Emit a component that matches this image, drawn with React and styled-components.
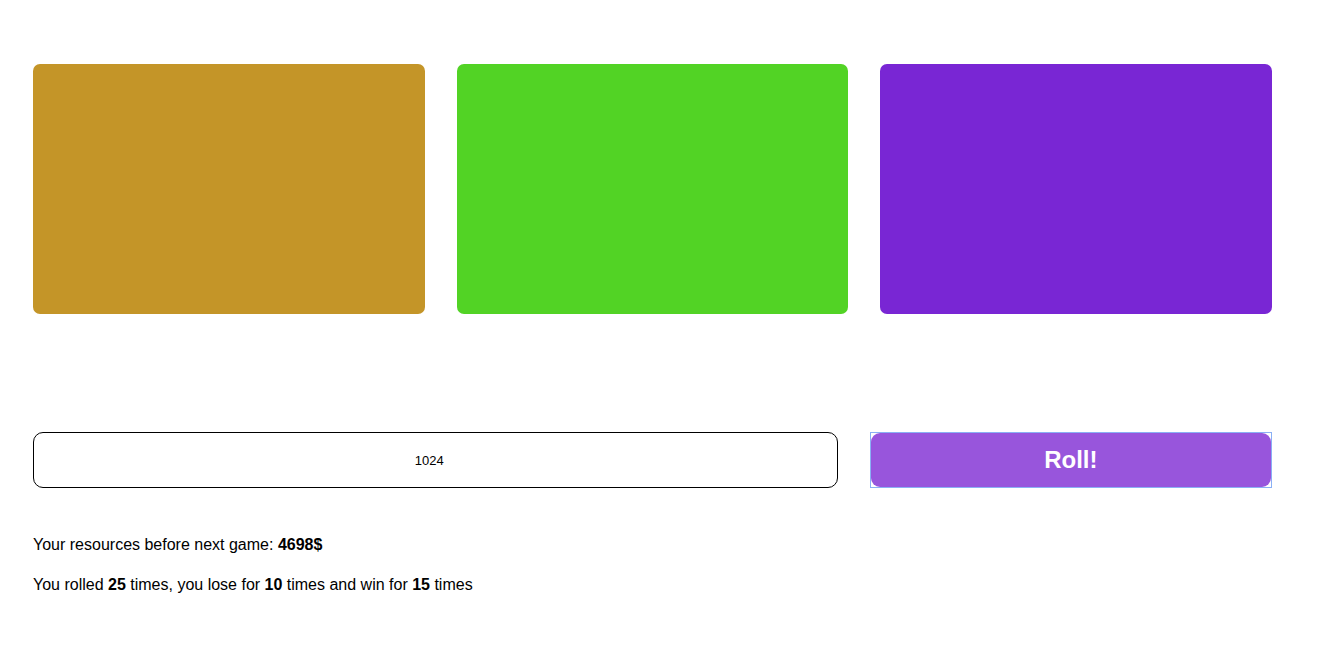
import React from "react";
import styled, { createGlobalStyle } from "styled-components";

const Global = createGlobalStyle`
  html, body { margin: 0; padding: 0; background: #fff; }
  body { font-family: "Liberation Sans", Arial, sans-serif; color: #000; }
`;

const Page = styled.div`
  width: 1239px;
  padding: 64px 0 0 33px;
`;

const Cards = styled.div`
  display: grid;
  grid-template-columns: repeat(3, 1fr);
  gap: 32px;
`;

const Card = styled.div`
  height: 250px;
  border-radius: 7px;
  background: ${(p) => p.$color};
`;

const Controls = styled.div`
  display: grid;
  grid-template-columns: 2fr 1fr;
  gap: 32px;
  margin-top: 118px;
`;

const Input = styled.input`
  width: 100%;
  box-sizing: border-box;
  height: 56px;
  border: 1px solid #000;
  border-radius: 10px;
  background: #fff;
  font-family: "Liberation Sans", Arial, sans-serif;
  font-size: 13px;
  text-align: center;
  padding: 0 12px 0 0;
  color: #000;
  outline: none;
`;

const ButtonFrame = styled.div`
  box-sizing: border-box;
  height: 56px;
  border: 1px solid #8ab0f5;
  display: flex;
`;

const Button = styled.button`
  flex: 1;
  border: none;
  border-radius: 9px;
  background: #9855dc;
  color: #fff;
  font-family: "Liberation Sans", Arial, sans-serif;
  font-size: 24px;
  font-weight: bold;
  padding: 0;
  outline: none;
  cursor: pointer;
`;

const Stats = styled.div`
  margin-top: 45px;
  font-size: 16px;
  line-height: 24px;
`;

const Line = styled.p`
  margin: 0 0 16px;
`;

export default function App() {
  return (
    <>
      <Global />
      <Page>
        <Cards>
          <Card $color="#c49528" />
          <Card $color="#52d325" />
          <Card $color="#7926d4" />
        </Cards>
        <Controls>
          <Input type="text" defaultValue="1024" />
          <ButtonFrame>
            <Button>Roll!</Button>
          </ButtonFrame>
        </Controls>
        <Stats>
          <Line>
            Your resources before next game: <b>4698$</b>
          </Line>
          <Line>
            You rolled <b>25</b> times, you lose for <b>10</b> times and win for <b>15</b> times
          </Line>
        </Stats>
      </Page>
    </>
  );
}
